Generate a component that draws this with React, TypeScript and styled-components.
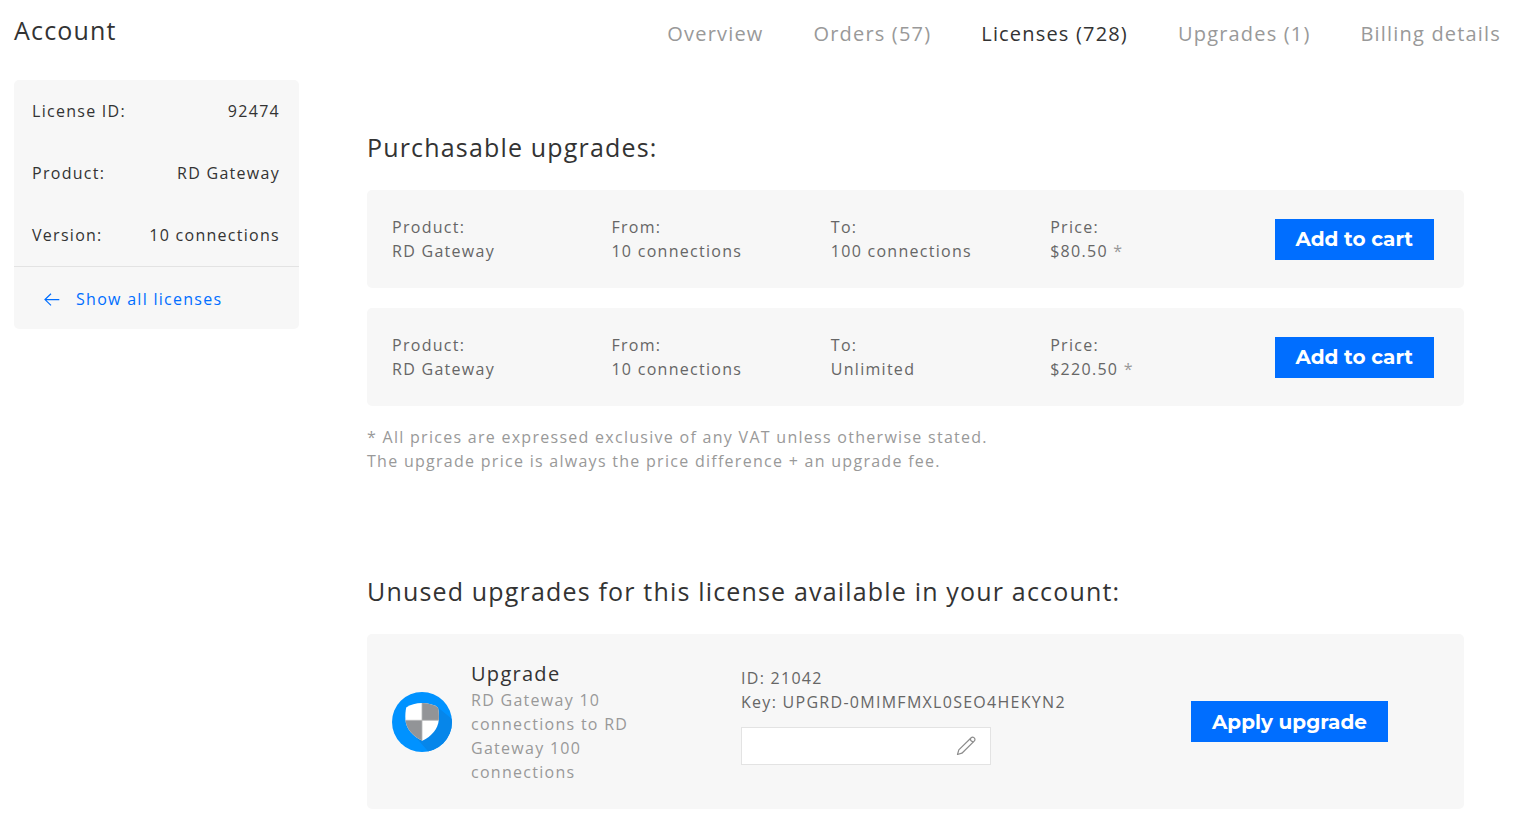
import React from "react";
import styled, { createGlobalStyle } from "styled-components";

const GlobalStyle = createGlobalStyle`
  *, *::before, *::after { box-sizing: border-box; }
  body {
    margin: 0;
    background: #fff;
    color: #666;
    font-family: "Open Sans", sans-serif;
    font-size: 16px;
    font-weight: 400;
    line-height: 24px;
    letter-spacing: 0.08em;
  }
  h1, h2, h3, p, dl, dd, ul { margin: 0; padding: 0; font-weight: 400; }
`;

const Header = styled.header`
  display: flex;
  justify-content: space-between;
  align-items: flex-start;
  height: 80px;
  padding: 15px 20px 0 14px;
`;

const PageTitle = styled.h1`
  color: #333;
  font-size: 25px;
  line-height: 30px;
  letter-spacing: 0.047em;
`;

const Nav = styled.nav`
  display: flex;
  gap: 50px;
  padding-top: 4px;
`;

const NavLink = styled.a<{ $active?: boolean }>`
  color: ${(p) => (p.$active ? "#333" : "#999")};
  font-size: 20px;
  line-height: 30px;
  letter-spacing: 0.059em;
  text-decoration: none;
  white-space: nowrap;
`;

const Layout = styled.div`
  display: grid;
  grid-template-columns: 285px minmax(0, 1fr);
  column-gap: 68px;
  align-items: start;
  padding: 0 57px 22px 14px;
`;

const Sidebar = styled.aside`
  border-radius: 5px;
  background: #f7f7f7;
  color: #333;
`;

const Facts = styled.dl`
  border-bottom: 1px solid #e3e3e3;
`;

const Fact = styled.div`
  display: flex;
  justify-content: space-between;
  align-items: center;
  height: 62px;
  padding: 0 19px 0 18px;
`;

const BackLink = styled.a`
  display: flex;
  align-items: center;
  gap: 16px;
  height: 62px;
  padding: 2px 30px 0;
  color: #006eff;
  text-decoration: none;
`;

const Main = styled.main`
  padding-top: 50px;
`;

const Section = styled.section`
  & + & {
    margin-top: 101px;
  }
`;

const SectionTitle = styled.h2`
  margin-bottom: 26px;
  color: #333;
  font-size: 25px;
  line-height: 34px;
  letter-spacing: 0.047em;
`;

const Cards = styled.div`
  display: grid;
  gap: 20px;
`;

const OfferCard = styled.article`
  display: grid;
  grid-template-columns: repeat(5, minmax(0, 1fr));
  align-items: center;
  min-height: 98px;
  border-radius: 5px;
  background: #f7f7f7;
`;

const OfferField = styled.div`
  padding-left: 25px;
`;

const Muted = styled.span`
  color: #999;
`;

const Note = styled.p`
  margin-top: 19px;
  color: #999;
`;

const UpgradeCard = styled.article`
  display: grid;
  grid-template-columns: 7fr 8fr 7fr;
  align-items: center;
  min-height: 175px;
  border-radius: 5px;
  background: #f7f7f7;
`;

const UpgradeInfo = styled.div`
  display: flex;
  align-items: center;
  gap: 19px;
  padding: 0 70px 0 25px;

  svg { flex: none; }
`;

const UpgradeName = styled.h3`
  color: #333;
  font-size: 20px;
  line-height: 28px;
`;

const UpgradeKey = styled.div`
  padding: 0 0 12px 25px;
`;

const NoteField = styled.label`
  display: flex;
  align-items: center;
  width: 250px;
  height: 38px;
  margin-top: 13px;
  padding-right: 14px;
  border: 1px solid #e3e3e3;
  background: #fff;
`;

const NoteInput = styled.input`
  flex: 1;
  min-width: 0;
  height: 100%;
  padding: 0 12px;
  border: 0;
  outline: 0;
  background: transparent;
  color: #666;
  font: inherit;
`;

const Action = styled.div`
  display: flex;
  justify-content: center;
`;

const Button = styled.button<{ $wide?: boolean }>`
  width: ${(p) => (p.$wide ? 197 : 159)}px;
  height: 41px;
  padding: 0;
  border: 0;
  background: #006eff;
  color: #fff;
  font-family: Montserrat, Inter, sans-serif;
  font-size: 20px;
  font-weight: 700;
  line-height: 24px;
  cursor: pointer;
`;

const tabs = ["Overview", "Orders (57)", "Licenses (728)", "Upgrades (1)", "Billing details"];

const facts = [
  ["License ID:", "92474"],
  ["Product:", "RD Gateway"],
  ["Version:", "10 connections"],
];

const offers = [
  { product: "RD Gateway", from: "10 connections", to: "100 connections", price: "$80.50" },
  { product: "RD Gateway", from: "10 connections", to: "Unlimited", price: "$220.50" },
];

const ArrowLeft = () => (
  <svg width="16" height="14" viewBox="0 0 16 14" fill="none" stroke="currentColor" strokeWidth="1.2" aria-hidden="true">
    <path d="M15.3 7.600H1M7 1.800 1 7.600l6 5.800" />
  </svg>
);

const Pencil = () => (
  <svg width="20" height="20" viewBox="0 0 20 20" fill="none" stroke="#8c8c8c" strokeWidth="1.2" strokeLinejoin="round" aria-hidden="true">
    <path d="M1.500 18.500l1.300-4.600L15.200 1.700a1.900 1.900 0 0 1 2.700 0l.5.500a1.900 1.900 0 0 1 0 2.700L5.900 17.200z" />
    <path d="M14.200 2.700c.2 1.800 1.300 2.900 3.200 3.200" />
  </svg>
);

const ShieldLogo = () => (
  <svg width="60" height="60" viewBox="0 0 60 60" aria-hidden="true">
    <defs>
      <clipPath id="disc"><circle cx="30" cy="30" r="30" /></clipPath>
      <clipPath id="shield">
        <path d="M30 11c6 0 12 1.600 16 4.600.8 4 1 8 .8 12C46.200 37 39.500 44.500 30.300 48.800 21 44.500 14 37 13.400 27.600c-.2-4 0-8 .8-12C18.200 12.600 24 11 30 11z" />
      </clipPath>
    </defs>
    <g clipPath="url(#disc)">
      <path d="M0 0h60v60H0z" fill="#0092ff" />
      <path d="M46 15.500 66 32V66H42L24 45.500z" fill="#0686ea" />
    </g>
    <g clipPath="url(#shield)">
      <path d="M13 10h35v40H13z" fill="#fff" />
      <path d="M30 10h18v18.300H30zM13 28.300h17V50H13z" fill="#929497" />
      <path d="M30 10v40M13 28.300h35" stroke="#b5b7b9" strokeWidth=".8" />
    </g>
  </svg>
);

export default function App() {
  return (
    <>
      <GlobalStyle />
      <Header>
        <PageTitle>Account</PageTitle>
        <Nav aria-label="Account sections">
          {tabs.map((tab) => {
            const active = tab.startsWith("Licenses");
            return (
              <NavLink key={tab} href="#" $active={active} aria-current={active ? "page" : undefined}>
                {tab}
              </NavLink>
            );
          })}
        </Nav>
      </Header>
      <Layout>
        <Sidebar>
          <Facts>
            {facts.map(([term, value]) => (
              <Fact key={term}>
                <dt>{term}</dt>
                <dd>{value}</dd>
              </Fact>
            ))}
          </Facts>
          <BackLink href="#">
            <ArrowLeft />
            Show all licenses
          </BackLink>
        </Sidebar>
        <Main>
          <Section>
            <SectionTitle>Purchasable upgrades:</SectionTitle>
            <Cards>
              {offers.map((o) => (
                <OfferCard key={o.to}>
                  <OfferField>Product:<br />{o.product}</OfferField>
                  <OfferField>From:<br />{o.from}</OfferField>
                  <OfferField>To:<br />{o.to}</OfferField>
                  <OfferField>Price:<br />{o.price} <Muted>*</Muted></OfferField>
                  <Action><Button type="button">Add to cart</Button></Action>
                </OfferCard>
              ))}
            </Cards>
            <Note>
              * All prices are expressed exclusive of any VAT unless otherwise stated.
              <br />
              The upgrade price is always the price difference + an upgrade fee.
            </Note>
          </Section>
          <Section>
            <SectionTitle>Unused upgrades for this license available in your account:</SectionTitle>
            <UpgradeCard>
              <UpgradeInfo>
                <ShieldLogo />
                <div>
                  <UpgradeName>Upgrade</UpgradeName>
                  <Muted as="p">RD Gateway 10 connections to RD Gateway 100 connections</Muted>
                </div>
              </UpgradeInfo>
              <UpgradeKey>
                <p>ID: 21042</p>
                <p>Key: UPGRD-0MIMFMXL0SEO4HEKYN2</p>
                <NoteField>
                  <NoteInput type="text" aria-label="Upgrade note" />
                  <Pencil />
                </NoteField>
              </UpgradeKey>
              <Action><Button type="button" $wide>Apply upgrade</Button></Action>
            </UpgradeCard>
          </Section>
        </Main>
      </Layout>
    </>
  );
}
